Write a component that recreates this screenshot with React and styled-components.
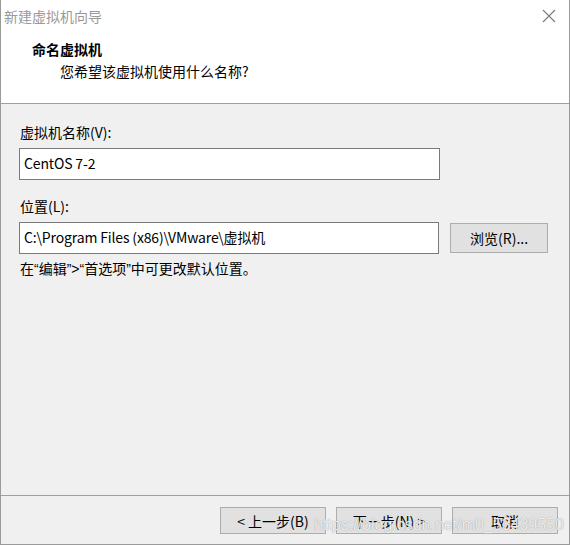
import React from "react";
import styled, { createGlobalStyle } from "styled-components";

const Global = createGlobalStyle`
  html, body { margin: 0; padding: 0; background: #ffffff; }
  body {
    font-family: "Microsoft YaHei UI", "Noto Sans CJK SC", sans-serif;
    font-size: 14px;
    color: #000;
  }
  * { box-sizing: border-box; }
`;

const Window = styled.div`
  position: relative;
  width: 570px;
  height: 545px;
  display: flex;
  flex-direction: column;
  border-left: 1px solid #9a9a9a;
  border-right: 1px solid #9a9a9a;
  border-bottom: 1px solid #9a9a9a;
  background: #f0f0f0;
  overflow: hidden;
`;

const TitleBar = styled.div`
  height: 32px;
  display: flex;
  align-items: center;
  justify-content: space-between;
  padding: 0 13px 1px 3px;
  background: #fff;
`;

const TitleText = styled.span`
  color: #999;
  font-size: 14px;
  line-height: 20px;
`;

const Header = styled.div`
  height: 72px;
  background: #fff;
  border-bottom: 1px solid #a0a0a0;
  padding: 7px 0 0 31px;
  display: flex;
  flex-direction: column;
  gap: 2px;
`;

const HeaderTitle = styled.div`
  font-weight: 700;
  line-height: 20px;
`;

const HeaderSub = styled.div`
  padding-left: 28px;
  line-height: 20px;
`;

const Body = styled.div`
  flex: 1;
  padding: 18px 21px 0 18px;
  display: flex;
  flex-direction: column;
`;

const Label = styled.div`
  line-height: 20px;
  padding-left: 1px;
  margin-top: ${(p) => p.$mt || 0}px;
  margin-bottom: 6px;
`;

const Row = styled.div`
  display: flex;
  align-items: flex-start;
  gap: 11px;
`;

const TextBox = styled.div`
  width: 421px;
  height: 32px;
  border: 1px solid #7a7a7a;
  background: #fff;
  padding: 4px 4px 0;
  line-height: 20px;
  white-space: nowrap;
  letter-spacing: -0.15px;
`;

const Button = styled.div`
  width: ${(p) => p.$w || 106}px;
  height: ${(p) => p.$h || 27}px;
  margin-top: ${(p) => p.$mt || 0}px;
  background: #e1e1e1;
  border: 1px solid #adadad;
  display: flex;
  align-items: center;
  justify-content: center;
  line-height: 20px;
  white-space: nowrap;
`;

const Hint = styled.div`
  margin-top: 4px;
  line-height: 20px;
  padding-left: 1px;
`;

const Quote = styled.span`
  font-family: "Liberation Sans", Arial, sans-serif;
`;

const Footer = styled.div`
  height: 49px;
  border-top: 1px solid #a0a0a0;
  display: flex;
  justify-content: flex-end;
  align-items: flex-start;
  padding: 11px 11px 0 0;
  gap: 10px;
`;

const Watermark = styled.span`
  position: absolute;
  left: 313px;
  bottom: 10px;
  font-family: "Liberation Sans", Arial, sans-serif;
  font-size: 16px;
  line-height: 18px;
  color: rgba(255, 255, 255, 0.85);
  text-shadow: 0 0 1px rgba(120, 120, 120, 0.9);
  pointer-events: none;
  white-space: nowrap;
`;

const CloseIcon = () => (
  <svg width="14" height="14" viewBox="0 0 14 14">
    <path d="M1 1 L13 13 M13 1 L1 13" stroke="#7a7a7a" strokeWidth="1.1" fill="none" />
  </svg>
);

export default function App() {
  return (
    <>
      <Global />
      <Window>
        <TitleBar>
          <TitleText>新建虚拟机向导</TitleText>
          <CloseIcon />
        </TitleBar>
        <Header>
          <HeaderTitle>命名虚拟机</HeaderTitle>
          <HeaderSub>您希望该虚拟机使用什么名称?</HeaderSub>
        </Header>
        <Body>
          <Label>虚拟机名称(V):</Label>
          <TextBox>CentOS 7-2</TextBox>
          <Label $mt={16}>位置(L):</Label>
          <Row>
            <TextBox>C:\Program Files (x86)\VMware\虚拟机</TextBox>
            <Button $w={98} $h={30} $mt={1}>浏览(R)...</Button>
          </Row>
          <Hint>
            在<Quote>“</Quote>编辑<Quote>”&gt;“</Quote>首选项<Quote>”</Quote>中可更改默认位置。
          </Hint>
        </Body>
        <Footer>
          <Button>&lt; 上一步(B)</Button>
          <Button>下一步(N) &gt;</Button>
          <Button>取消</Button>
        </Footer>
        <Watermark>https://blog.csdn.net/m0_53439550</Watermark>
      </Window>
    </>
  );
}
